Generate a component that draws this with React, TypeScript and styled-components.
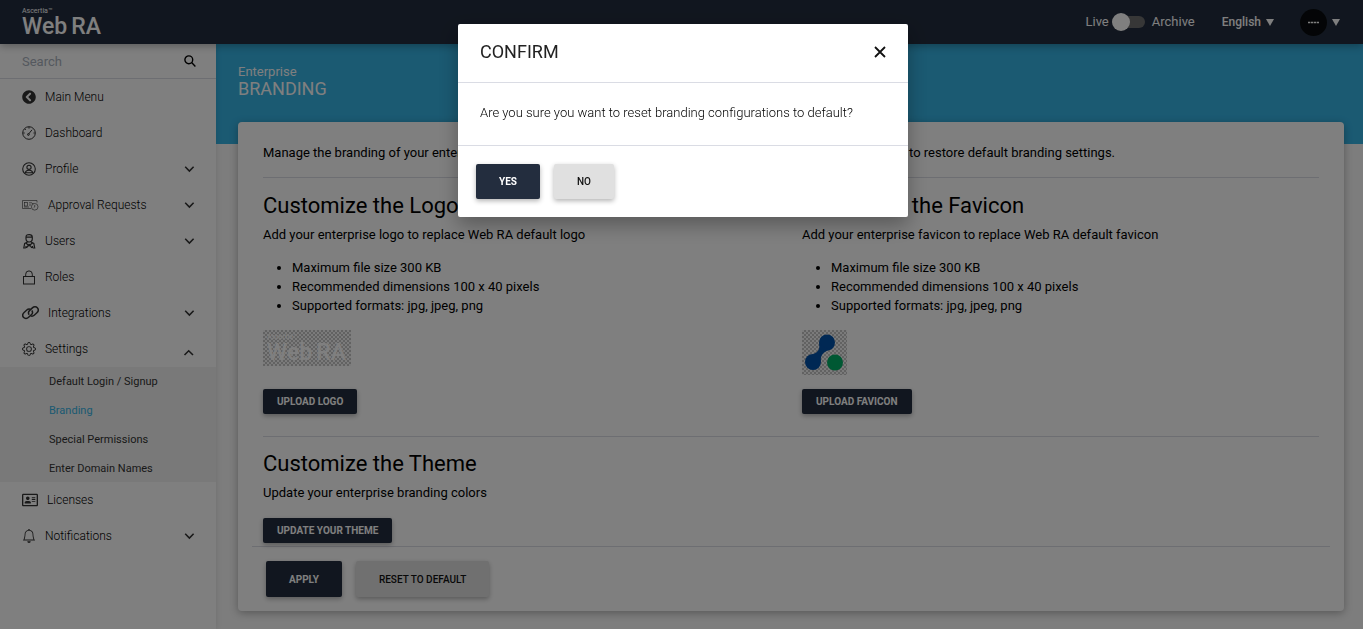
import React from "react";
import styled, { createGlobalStyle } from "styled-components";
import { FaChevronCircleLeft, FaRegAddressCard } from "react-icons/fa";
import { BsBell, BsGear } from "react-icons/bs";

const navy = "#232d3e";
const blue = "#36b4e5";

const GlobalStyle = createGlobalStyle`
  *, *::before, *::after { box-sizing: border-box; }
  body {
    margin: 0;
    background: #fafafa;
    color: #000;
    font: 400 13px/19px Roboto, "Liberation Sans", sans-serif;
  }
  button, input, select { font-family: inherit; }
  h1, h2, p, ul { margin: 0; font-weight: inherit; }
`;

const Page = styled.div`
  min-height: 100vh;
  display: flex;
  flex-direction: column;
`;

const Header = styled.header`
  height: 44px;
  padding: 0 23px 0 22px;
  display: flex;
  align-items: center;
  justify-content: space-between;
  background: ${navy};
  color: #fff;
  box-shadow: 0 2px 8px rgba(0, 0, 0, 0.3);
  position: relative;
  z-index: 2;
`;

const Brand = styled.a`
  display: flex;
  flex-direction: column;
  color: #fff;
  text-decoration: none;
`;

const BrandSmall = styled.span`
  font-size: 7px;
  line-height: 8px;
`;

const BrandName = styled.span`
  display: flex;
  gap: 4px;
  font-size: 23px;
  font-weight: 500;
  line-height: 23px;
`;

const HeaderTools = styled.div`
  display: flex;
  align-items: center;
`;

const ModeGroup = styled.div`
  display: flex;
  align-items: center;
  gap: 7px;
  margin-right: 27px;
`;

const ModeLabel = styled.label`
  padding-bottom: 2px;
`;

const Switch = styled.input`
  appearance: none;
  width: 29px;
  height: 12px;
  margin: 0;
  border-radius: 6px;
  background: #6e6e6e;
  display: flex;
  align-items: center;
  &::before {
    content: "";
    flex: none;
    width: 18px;
    height: 18px;
    margin-left: -4px;
    border-radius: 50%;
    background: #fff;
  }
`;

const MenuButton = styled.button`
  display: flex;
  align-items: center;
  gap: 5px;
  padding: 0;
  border: 0;
  background: none;
  color: #fff;
  font-size: 12px;
  font-weight: 500;
  line-height: 19px;
`;

const Avatar = styled.span`
  width: 27px;
  height: 27px;
  margin-left: 26px;
  border-radius: 50%;
  background: #080b0e;
  display: flex;
  align-items: center;
  justify-content: center;
`;

const Body = styled.div`
  flex: 1;
  display: flex;
`;

const Sidebar = styled.nav`
  width: 216px;
  flex: none;
  background: #fff;
  box-shadow: 0 0 6px rgba(0, 0, 0, 0.12);
  position: relative;
  z-index: 1;
`;

const SearchRow = styled.label`
  height: 35px;
  padding: 0 20px 0 22px;
  border-bottom: 1px solid #dadce4;
  display: flex;
  align-items: center;
  justify-content: space-between;
`;

const SearchInput = styled.input`
  width: 140px;
  padding: 0;
  border: 0;
  outline: 0;
  background: none;
  font-size: 13px;
  line-height: 19px;
  &::placeholder { color: #a9b1bd; }
`;

const NavList = styled.ul`
  padding: 0;
  list-style: none;
`;

const NavLink = styled.a`
  height: 36px;
  padding: 0 22px;
  display: flex;
  align-items: center;
  gap: 9px;
  color: #333;
  font-size: 12px;
  text-decoration: none;
  svg { flex: none; }
`;

const NavLabel = styled.span`
  flex: 1;
  color: #000;
  font-weight: 300;
`;

const SubList = styled.ul`
  padding: 0;
  list-style: none;
  display: grid;
  gap: 1px;
  background: #f2f2f2;
`;

const SubLink = styled.a<{ $active?: boolean }>`
  display: block;
  padding: 1px 0 0 49px;
  color: ${(p) => (p.$active ? blue : "#333")};
  font-size: 11px;
  line-height: 27px;
  text-decoration: none;
`;

const Main = styled.main`
  flex: 1;
  min-width: 0;
`;

const Banner = styled.div`
  height: 100px;
  padding: 18px 22px;
  background: ${blue};
  color: #fff;
`;

const BannerTitle = styled.h1`
  font-size: 18px;
  line-height: 16px;
`;

const Card = styled.section`
  margin: -22px 19px 18px 22px;
  padding: 0 14px 14px;
  border-radius: 4px;
  background: #fff;
  box-shadow: 0 2px 8px rgba(0, 0, 0, 0.3);
`;

const Section = styled.div`
  margin: 0 11px;
  border-bottom: 1px solid #dadce4;
`;

const Intro = styled(Section)`
  padding: 21px 0 15px;
  white-space: nowrap;
`;

const Columns = styled(Section)`
  display: grid;
  grid-template-columns: 1fr 1fr;
  gap: 22px;
  padding: 14px 0 22px;
`;

const ThemeBlock = styled.div`
  padding: 13px 11px 3px;
`;

const ThemeText = styled.p`
  margin-bottom: 16px;
`;

const Title = styled.h2`
  font-size: 22px;
  line-height: 27px;
  margin-bottom: 6px;
`;

const Rules = styled.ul`
  margin: 14px 0 15px;
  padding-left: 29px;
`;

const Preview = styled.div`
  height: 59px;
`;

const Checker = styled.div<{ $wide?: boolean }>`
  width: ${(p) => (p.$wide ? 88 : 45)}px;
  height: ${(p) => (p.$wide ? 36 : 45)}px;
  padding: ${(p) => (p.$wide ? "3px 4px" : "0")};
  background: repeating-conic-gradient(#c4c4c4 0 25%, #f6f6f6 0 50%) 0 0 / 4px 4px;
`;

const Button = styled.button<{ $light?: boolean; $small?: boolean }>`
  height: ${(p) => (p.$small ? 25 : 36)}px;
  padding: 0 ${(p) => (p.$small ? 14 : 23)}px;
  border: 0;
  border-radius: 2px;
  background: ${(p) => (p.$light ? "#e0e0e0" : navy)};
  color: ${(p) => (p.$light ? "#111" : "#fff")};
  font-size: 10px;
  font-weight: ${(p) => (p.$light ? 500 : 700)};
  line-height: 15px;
  box-shadow: 0 2px 5px rgba(0, 0, 0, 0.3);
`;

const Actions = styled.div`
  display: flex;
  gap: 14px;
  padding: 14px 14px 0;
  border-top: 1px solid #dadce4;
`;

const DialogActions = styled(Actions)`
  padding: 18px;
  ${Button} { height: 35px; }
`;

const Overlay = styled.div`
  position: fixed;
  inset: 0;
  z-index: 10;
  padding: 24px 8px 8px 11px;
  display: flex;
  align-items: flex-start;
  justify-content: center;
  background: rgba(0, 0, 0, 0.5);
`;

const Dialog = styled.div`
  width: 100%;
  max-width: 450px;
  border-radius: 2px;
  background: #fff;
  color: #222;
  box-shadow: 0 8px 20px rgba(0, 0, 0, 0.3);
`;

const DialogHeader = styled.div`
  height: 58px;
  padding: 0 22px 2px;
  display: flex;
  align-items: center;
  justify-content: space-between;
`;

const DialogTitle = styled.h2`
  font-size: 18px;
  line-height: 24px;
`;

const CloseButton = styled.button`
  display: flex;
  padding: 0;
  border: 0;
  background: none;
  color: #111;
`;

const DialogText = styled.p`
  padding: 20px 22px 23px;
  border-top: 1px solid #dadce4;
  color: #000;
  font-weight: 300;
`;

const line = { fill: "none", stroke: "currentColor" } as const;

const Caret = () => (
  <svg width="8" height="7" viewBox="0 0 8 7" fill="currentColor"><path d="M0 0h8L4 7z" /></svg>
);

const Chevron = ({ up }: { up?: boolean }) => (
  <svg width="10" height="6" viewBox="0 0 10 6" overflow="visible" {...line} strokeWidth="1.6">
    <path d={up ? "M.5 9l4.200-4.200L9 9" : "M1.200.8l4.200 4.200L9.600.8"} />
  </svg>
);

const GaugeIcon = () => (
  <svg width="14" height="14" viewBox="0 0 14 14" {...line} strokeWidth="1">
    <circle cx="7" cy="7" r="6.300" />
    <path d="M6.400 8.300 10 3.800M7 1v1.600M2.800 3l1 1M1.200 7h1.500M12.800 7h-1.300" />
    <circle cx="6.400" cy="8.500" r=".9" />
  </svg>
);

const ProfileIcon = () => (
  <svg width="14" height="14" viewBox="0 0 14 14" {...line} strokeWidth="1.100">
    <circle cx="7" cy="7" r="6.300" />
    <circle cx="7" cy="5.300" r="2.100" />
    <path d="M3.300 10.800c.3-2 1.500-2.500 3.700-2.500s3.400.5 3.700 2.500z" />
  </svg>
);

const ApprovalIcon = () => (
  <svg width="17" height="12" viewBox="0 0 17 12" {...line} strokeWidth=".6">
    <path d="M9 9.500H.5v-8h14.500v2" />
    <rect x="2.500" y="3.500" width="3" height="3.500" />
    <path d="M7 3.800h3M8 5v2M10 4.500h1.500M2 8h5" />
    <circle cx="12.700" cy="7.800" r="3.300" />
    <path d="M12.700 6v2l-1 .7" />
  </svg>
);

const UserIcon = () => (
  <svg width="14" height="15" viewBox="0 0 14 15" {...line} strokeWidth="1.200">
    <path d="M4 3.300C4 .8 5 .7 7.200.7S10.300 1 10.300 3.300v1.500C10.300 7 8.800 8 7.200 8S4 7 4 4.800zM4 3.200h6.300" />
    <path d="M5.500 8 2.700 9.500 1.800 14h2M9 8l2.800 1.500.9 4.500h-2M4 9l3 3 3.300-3M7.200 10l-2.700 4M7.200 10l2.600 4M4 12v2M10.500 12v2" />
  </svg>
);

const LockIcon = () => (
  <svg width="14" height="15" viewBox="0 0 14 15" {...line} strokeWidth="1">
    <rect x="1.500" y="6.500" width="11" height="7.500" />
    <path d="M3.700 6.500V4.200a3.300 3.300 0 0 1 6.600 0v2.300" />
  </svg>
);

const LinkIcon = () => (
  <svg width="17" height="14" viewBox="0 0 17 14" {...line} strokeWidth="1.500">
    <path d="M8.300 3.300C7 2.800 5.800 3.100 4.800 4L2.100 6.500c-1.600 1.500-1.600 3.700-.4 5s3.400 1.200 4.900-.2l2.700-2.500c1.300-1.200 1.500-3 .5-4.300" />
    <path d="M8.700 9.900c1.300.5 2.500.2 3.500-.7l2.700-2.500c1.600-1.500 1.600-3.700.4-5s-3.400-1.200-4.900.2L7.700 4.400c-1.300 1.200-1.500 3-.5 4.300" />
  </svg>
);

type Item = { label: string; icon: React.ReactNode; arrow?: boolean };

const upper: Item[] = [
  { label: "Main Menu", icon: <FaChevronCircleLeft size={14} /> },
  { label: "Dashboard", icon: <GaugeIcon /> },
  { label: "Profile", icon: <ProfileIcon />, arrow: true },
  { label: "Approval Requests", icon: <ApprovalIcon />, arrow: true },
  { label: "Users", icon: <UserIcon />, arrow: true },
  { label: "Roles", icon: <LockIcon /> },
  { label: "Integrations", icon: <LinkIcon />, arrow: true },
];

const lower: Item[] = [
  { label: "Licenses", icon: <FaRegAddressCard size={16} /> },
  { label: "Notifications", icon: <BsBell size={14} />, arrow: true },
];

const subItems = ["Default Login / Signup", "Branding", "Special Permissions", "Enter Domain Names"];

const NavEntry = ({ label, icon, arrow }: Item) => (
  <li>
    <NavLink href="#">
      {icon}
      <NavLabel>{label}</NavLabel>
      {arrow && <Chevron />}
    </NavLink>
  </li>
);

const Logo = () => (
  <>
    <BrandSmall>Ascertia™</BrandSmall>
    <BrandName><span>Web</span><span>RA</span></BrandName>
  </>
);

const FileRules = () => (
  <Rules>
    <li>Maximum file size 300 KB</li>
    <li>Recommended dimensions 100 x 40 pixels</li>
    <li>Supported formats: jpg, jpeg, png</li>
  </Rules>
);

export default function App() {
  return (
    <Page>
      <GlobalStyle />
      <Header>
        <Brand href="#"><Logo /></Brand>
        <HeaderTools>
          <ModeGroup>
            <ModeLabel htmlFor="mode">Live</ModeLabel>
            <Switch id="mode" type="checkbox" role="switch" />
            <ModeLabel htmlFor="mode">Archive</ModeLabel>
          </ModeGroup>
          <MenuButton type="button">English <Caret /></MenuButton>
          <MenuButton type="button" aria-label="Account">
            <Avatar>
              <svg width="11" height="3" viewBox="0 0 11 3" {...line} strokeWidth="1.500">
                <path d="M0 1.500h11" strokeDasharray="2.300 .6" />
              </svg>
            </Avatar>
            <Caret />
          </MenuButton>
        </HeaderTools>
      </Header>
      <Body>
        <Sidebar>
          <SearchRow>
            <SearchInput placeholder="Search" aria-label="Search" />
            <svg width="12" height="12" viewBox="0 0 12 12" {...line} strokeWidth="1.400">
              <circle cx="4.800" cy="4.800" r="3.900" />
              <path d="m7.600 7.600 3.800 3.800" />
            </svg>
          </SearchRow>
          <NavList>
            {upper.map((item) => <NavEntry key={item.label} {...item} />)}
            <li>
              <NavLink href="#">
                <BsGear size={14} />
                <NavLabel>Settings</NavLabel>
                <Chevron up />
              </NavLink>
              <SubList>
                {subItems.map((label) => (
                  <li key={label}><SubLink href="#" $active={label === "Branding"}>{label}</SubLink></li>
                ))}
              </SubList>
            </li>
            {lower.map((item) => <NavEntry key={item.label} {...item} />)}
          </NavList>
        </Sidebar>
        <Main>
          <Banner>
            <p>Enterprise</p>
            <BannerTitle>BRANDING</BannerTitle>
          </Banner>
          <Card>
            <Intro>
              Manage the branding of your enterprise by customizing the logo, favicon and theme colors. Use the reset button to restore default branding settings.
            </Intro>
            <Columns>
              <div>
                <Title>Customize the Logo</Title>
                <p>Add your enterprise logo to replace Web RA default logo</p>
                <FileRules />
                <Preview>
                  <Checker $wide><Brand as="div"><Logo /></Brand></Checker>
                </Preview>
                <Button $small type="button">UPLOAD LOGO</Button>
              </div>
              <div>
                <Title>Customize the Favicon</Title>
                <p>Add your enterprise favicon to replace Web RA default favicon</p>
                <FileRules />
                <Preview>
                  <Checker>
                    <svg width="45" height="45" viewBox="0 0 45 45">
                      <g fill="#0050a8">
                        <circle cx="25" cy="12.500" r="8" />
                        <circle cx="11" cy="32" r="8" />
                        <path d="M17 13c1 5 0 9-6 11l8 8c-1-6 2-10 8-12z" />
                      </g>
                      <circle cx="33" cy="32.500" r="8" fill="#00b067" />
                    </svg>
                  </Checker>
                </Preview>
                <Button $small type="button">UPLOAD FAVICON</Button>
              </div>
            </Columns>
            <ThemeBlock>
              <Title>Customize the Theme</Title>
              <ThemeText>Update your enterprise branding colors</ThemeText>
              <Button $small type="button">UPDATE YOUR THEME</Button>
            </ThemeBlock>
            <Actions>
              <Button type="button">APPLY</Button>
              <Button $light type="button">RESET TO DEFAULT</Button>
            </Actions>
          </Card>
        </Main>
      </Body>
      <Overlay>
        <Dialog role="dialog" aria-modal="true" aria-labelledby="confirm-title">
          <DialogHeader>
            <DialogTitle id="confirm-title">CONFIRM</DialogTitle>
            <CloseButton type="button" aria-label="Close">
              <svg width="12" height="12" viewBox="0 0 12 12" {...line} strokeWidth="1.800">
                <path d="m1 1 10 10M11 1 1 11" />
              </svg>
            </CloseButton>
          </DialogHeader>
          <DialogText>Are you sure you want to reset branding configurations to default?</DialogText>
          <DialogActions>
            <Button type="button">YES</Button>
            <Button $light type="button">NO</Button>
          </DialogActions>
        </Dialog>
      </Overlay>
    </Page>
  );
}
